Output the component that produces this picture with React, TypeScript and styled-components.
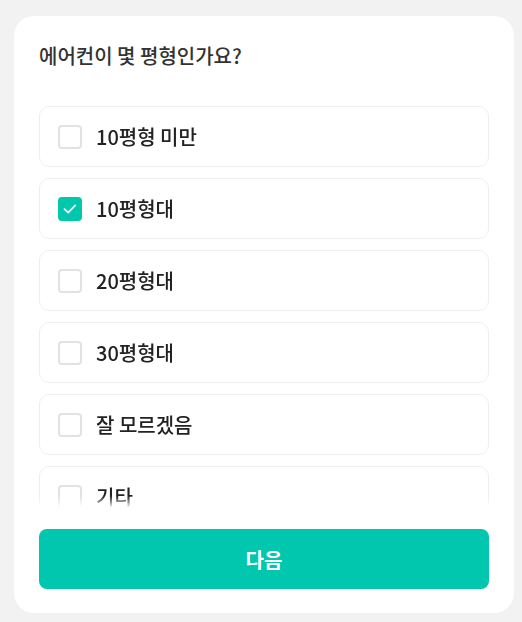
import { useState } from "react"
import styled, { createGlobalStyle } from "styled-components"

const GlobalStyle = createGlobalStyle`
  html, body {
    margin: 0;
    padding: 0;
    background: #f2f2f2;
    font-family: "Noto Sans CJK KR", "Noto Sans", sans-serif;
  }
  * {
    box-sizing: border-box;
  }
`

const Page = styled.div`
  padding: 16px 8px 9px 14px;
`

const Card = styled.div`
  width: 500px;
  height: 597px;
  background: #fff;
  border-radius: 20px;
  padding: 24px 25px 24px 25px;
  display: flex;
  flex-direction: column;
`

const Title = styled.h2`
  margin: 0;
  font-size: 20px;
  line-height: 32px;
  font-weight: 500;
  color: #333;
`

const OptionList = styled.div`
  margin-top: 34px;
  height: 402px;
  overflow: hidden;
  display: flex;
  flex-direction: column;
  gap: 11px;
  mask-image: linear-gradient(to bottom, #000 calc(100% - 12px), transparent);
`

const Option = styled.label`
  flex: 0 0 61px;
  display: flex;
  align-items: center;
  gap: 14px;
  padding: 0 18px;
  border: 1px solid #eeeeee;
  border-radius: 10px;
  cursor: pointer;
  font-size: 20px;
  font-weight: 500;
  color: #222;
`

const Box = styled.span<{ $checked: boolean }>`
  width: 24px;
  height: 24px;
  flex: none;
  border-radius: 4px;
  border: 2px solid ${(p) => (p.$checked ? "#00c7ae" : "#e2e2e2")};
  background: ${(p) => (p.$checked ? "#00c7ae" : "#fff")};
  display: flex;
  align-items: center;
  justify-content: center;
`

const NextButton = styled.button`
  margin-top: 21px;
  height: 60px;
  border: none;
  border-radius: 8px;
  background: #00c7ae;
  color: #fff;
  font-family: inherit;
  font-size: 20px;
  font-weight: 600;
  cursor: pointer;
`

const options = ["10평형 미만", "10평형대", "20평형대", "30평형대", "잘 모르겠음", "기타"]

export default function App() {
  const [selected, setSelected] = useState<string[]>(["10평형대"])

  const toggle = (o: string) =>
    setSelected((s) => (s.includes(o) ? s.filter((x) => x !== o) : [...s, o]))

  return (
    <>
      <GlobalStyle />
      <Page>
        <Card>
          <Title>에어컨이 몇 평형인가요?</Title>
          <OptionList>
            {options.map((o) => {
              const checked = selected.includes(o)
              return (
                <Option key={o} onClick={() => toggle(o)}>
                  <Box $checked={checked}>
                    {checked && (
                      <svg width="16" height="16" viewBox="0 0 16 16" fill="none">
                        <path
                          d="M2.5 8.2 L6.2 11.6 L13.2 4.4"
                          stroke="#fff"
                          strokeWidth="1.8"
                          strokeLinecap="round"
                          strokeLinejoin="round"
                        />
                      </svg>
                    )}
                  </Box>
                  {o}
                </Option>
              )
            })}
          </OptionList>
          <NextButton>다음</NextButton>
        </Card>
      </Page>
    </>
  )
}
